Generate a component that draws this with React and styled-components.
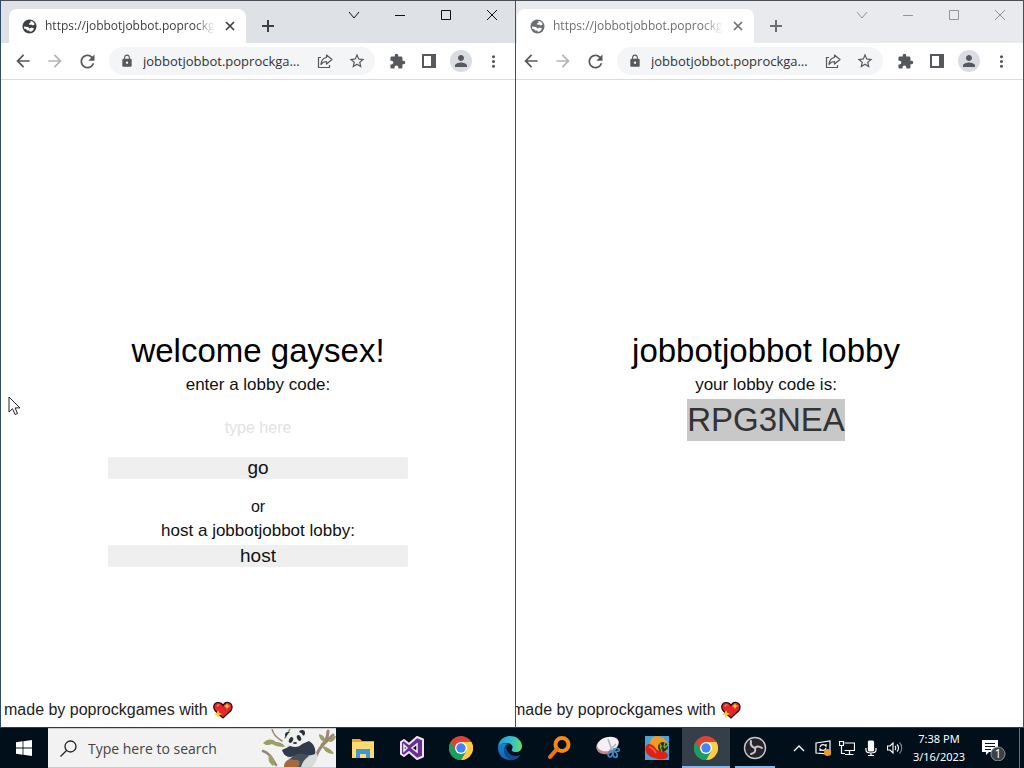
import React from "react";
import styled, { createGlobalStyle } from "styled-components";
import {
  MdArrowBack,
  MdArrowForward,
  MdExtension,
  MdLock,
  MdMoreVert,
  MdPerson,
  MdRefresh,
  MdStarBorder,
} from "react-icons/md";

const GlobalStyle = createGlobalStyle`
  * { box-sizing: border-box; }
  body { margin: 0; background: #fff; }
  button, input { font: inherit; color: inherit; margin: 0; padding: 0; border: 0; background: none; }
  svg { display: block; flex: none; }
`;

const uiFont = `"Open Sans", "Noto Sans", sans-serif`;
const pageFont = `"Liberation Sans", Arial, sans-serif`;

const Screen = styled.div`
  position: relative;
  display: flex;
  flex-direction: column;
  min-height: 100vh;
  overflow: hidden;
  font-family: ${uiFont};
`;

const Desktop = styled.main`
  flex: 1;
  display: flex;
`;

const Window = styled.section`
  position: relative;
  z-index: ${(p) => (p.$active ? 1 : 0)};
  flex: none;
  width: calc(50% + 4px);
  margin-right: -8px;
  display: flex;
  flex-direction: column;
  background: #fff;
  border: 1px solid #4a4f55;
  border-left-color: #2c4d68;
  border-bottom-color: #24424c;
`;

const TabStrip = styled.header`
  display: flex;
  align-items: flex-end;
  height: 42px;
  padding-left: 8px;
  background: ${(p) => (p.$active ? "#dee1e6" : "#e8eaed")};
  color: ${(p) => (p.$active ? "#3c4043" : "#6b6e72")};
`;

const Tab = styled.div`
  flex: 0 1 237px;
  min-width: 0;
  height: 34px;
  display: flex;
  align-items: center;
  gap: 8px;
  padding: 0 9px 0 13px;
  background: #fff;
  border-radius: 8px 8px 0 0;
`;

const TabTitle = styled.span`
  flex: 1;
  min-width: 0;
  overflow: hidden;
  white-space: nowrap;
  font-size: 12px;
  line-height: 16px;
  mask-image: linear-gradient(to right, #000 88%, transparent);
`;

const TabButton = styled.button`
  display: grid;
  place-items: center;
  width: 14px;
  height: 14px;
`;

const NewTab = styled.button`
  display: grid;
  place-items: center;
  width: 44px;
  height: 34px;
`;

const WindowControls = styled.div`
  align-self: flex-start;
  display: flex;
  margin-left: auto;
  color: ${(p) => (p.$active ? "#111" : "#929497")};
`;

const WindowButton = styled.button`
  display: grid;
  place-items: center;
  width: 46px;
  height: 28px;
`;

const Toolbar = styled.nav`
  display: flex;
  align-items: center;
  height: 37px;
  padding: 0 6px;
  border-bottom: 1px solid #dadce0;
  color: #55585c;
`;

const ToolButton = styled.button`
  display: grid;
  place-items: center;
  width: 32px;
  height: 32px;
  opacity: ${(p) => (p.disabled ? 0.45 : 1)};
`;

const Omnibox = styled.div`
  flex: 1;
  min-width: 0;
  display: flex;
  align-items: center;
  height: 28px;
  margin: 0 6px;
  padding: 0 2px 0 11px;
  border-radius: 14px;
  background: #f4f5f6;
`;

const Address = styled.input`
  flex: 1;
  min-width: 0;
  margin-left: 9px;
  outline: none;
  color: #303338;
  font-size: 13px;
  text-overflow: ellipsis;
`;

const Avatar = styled.span`
  display: grid;
  place-items: center;
  width: 22px;
  height: 22px;
  border-radius: 50%;
  background: #dadce3;
`;

const Page = styled.div`
  flex: 1;
  display: flex;
  flex-direction: column;
  font-family: ${pageFont};
  color: #111;
`;

const Lobby = styled.form`
  display: flex;
  flex-direction: column;
  align-items: center;
  padding-top: calc(50vh - 133px);
`;

const Title = styled.h1`
  margin: 0 0 2px;
  font-size: 33px;
  line-height: 40px;
  font-weight: 400;
  color: #000;
`;

const Line = styled.label`
  font-size: ${(p) => (p.$small ? 16 : 17)}px;
  line-height: 24px;
`;

const CodeInput = styled.input`
  width: 300px;
  height: 22px;
  margin: 20px 0 18px;
  text-align: center;
  font-size: 16px;
  outline: none;
  &::placeholder { color: #e2e2e2; opacity: 1; }
`;

const WideButton = styled.button`
  width: 300px;
  max-width: 100%;
  height: 22px;
  background: #efefef;
  border-radius: 2px;
  font-size: 19px;
  line-height: 22px;
`;

const Group = styled.div`
  display: flex;
  flex-direction: column;
  align-items: center;
  margin-top: 16px;
`;

const HostGroup = styled(Group)`
  gap: 2px;
  margin-top: 0;
`;

const LobbyCode = styled.output`
  margin-top: 2px;
  background: #c8c8c8;
  color: #333;
  font-size: 33px;
  line-height: 42px;
`;

const Credit = styled.footer`
  display: flex;
  align-items: center;
  gap: 5px;
  margin-top: auto;
  padding: 0 3px 5px;
  font-size: 16px;
  line-height: 24px;
  color: #222;
`;

const Pointer = styled.svg`
  position: absolute;
  z-index: 2;
  left: 8px;
  top: 396px;
`;

const Taskbar = styled.footer`
  display: flex;
  height: 40px;
  background: #010f1b;
  color: #fff;
`;

const Start = styled.button`
  display: grid;
  place-items: center;
  width: 48px;
`;

const Search = styled.label`
  display: flex;
  align-items: center;
  width: 288px;
  padding-left: 12px;
  margin-right: 3px;
  background: #f2f2f2;
  border: 1px solid #c9cccd;
  border-width: 1px 0;
  color: #222;
`;

const SearchInput = styled.input`
  flex: 1;
  min-width: 0;
  margin-left: 11px;
  outline: none;
  font-size: 14px;
  &::placeholder { color: #444; opacity: 1; }
`;

const Apps = styled.div`
  display: flex;
  gap: 1px;
`;

const AppButton = styled.button`
  display: flex;
  flex-direction: column;
  align-items: center;
  justify-content: space-between;
  width: 48px;
  padding-top: 8px;
  background: ${(p) => (p.$focused ? "#353f49" : "none")};
`;

const Underline = styled.span`
  width: ${(p) => (p.$wide ? 48 : 40)}px;
  height: 2px;
  background: #83b7e8;
`;

const Tray = styled.div`
  display: flex;
  align-items: center;
  margin-left: auto;
`;

const TrayButton = styled.button`
  display: grid;
  place-items: center;
  width: ${(p) => (p.$wide ? 44 : 24)}px;
  height: 40px;
`;

const Clock = styled.time`
  width: 64px;
  text-align: center;
  font-family: "Noto Sans", sans-serif;
  font-size: 11px;
  line-height: 18px;
`;

const ShowDesktop = styled.button`
  width: 5px;
  height: 40px;
  margin-left: 4px;
  border-left: 1px solid #66707a;
`;

const Stroke = ({ size = 16, box = 16, width = 1, children }) => (
  <svg width={size} height={size} viewBox={`0 0 ${box} ${box}`} fill="none" stroke="currentColor" strokeWidth={width}>
    {children}
  </svg>
);

const Globe = () => (
  <svg width="15" height="15" viewBox="0 0 15 15">
    <circle cx="7.5" cy="7.5" r="7" fill="currentColor" />
    <path d="M8.500 2c2 0 3.500 1.500 4.200 3.200L11 6.500 9 5.500 7.500 6 7 4.500 8.500 3.500zM2 7.500l4 .5 1.500 1.500 2-1 2.500 1c-.7 1.800-2 3-4 3.300L7 11.500H5L4 10H2.500C2.100 9.300 2 8.400 2 7.500z" fill="#fff" />
  </svg>
);

const Heart = () => (
  <svg width="20" height="20" viewBox="0 0 20 20">
    <path d="M10 18 2 10.500C-.5 7 1 2.500 5 2.500c2.500 0 4 1 5 3 1-2 3-3.500 5.500-3C19 3 20 7 18 10.500z" fill="#e8252c" stroke="#1a0808" strokeWidth="1.200" />
    <path d="m14 3 1 2.200 2.300.8-2.300 1L14 9.200 13 7l-2.200-1L13 5.200zM5 10l1.200 2.800L9 14l-2.800 1.200L5 18l-1.200-2.800L1 14l2.800-1.200z" fill="#ffc928" />
    <path d="M4 6.500c.3-1.200 1.200-1.700 2.400-1.500" stroke="#ff8c80" strokeWidth="1.300" fill="none" />
  </svg>
);

function BrowserWindow({ active, children }) {
  return (
    <Window $active={active}>
      <TabStrip $active={active}>
        <Tab>
          <Globe />
          <TabTitle>https://jobbotjobbot.poprockgames.com</TabTitle>
          <TabButton type="button" aria-label="Close tab">
            <Stroke size={10} box={10} width={1.7}><path d="m1 1 8 8M9 1 1 9" /></Stroke>
          </TabButton>
        </Tab>
        <NewTab type="button" aria-label="New tab">
          <Stroke size={14} box={14} width={2}><path d="M7 1v12M1 7h12" /></Stroke>
        </NewTab>
        <WindowControls $active={active}>
          <WindowButton type="button" aria-label="Search tabs">
            <Stroke size={12} box={12}><path d="m1 3 5 6 5-6" /></Stroke>
          </WindowButton>
          <WindowButton type="button" aria-label="Minimize">
            <Stroke size={12} box={12}><path d="M1 6.500h10" /></Stroke>
          </WindowButton>
          <WindowButton type="button" aria-label="Maximize">
            <Stroke size={12} box={12}><path d="M1.500 1.500h9v9h-9z" /></Stroke>
          </WindowButton>
          <WindowButton type="button" aria-label="Close">
            <Stroke size={12} box={12}><path d="m1 1 10 10M11 1 1 11" /></Stroke>
          </WindowButton>
        </WindowControls>
      </TabStrip>
      <Toolbar>
        <ToolButton type="button" aria-label="Back"><MdArrowBack size={20} /></ToolButton>
        <ToolButton type="button" aria-label="Forward" disabled><MdArrowForward size={20} /></ToolButton>
        <ToolButton type="button" aria-label="Reload"><MdRefresh size={21} /></ToolButton>
        <Omnibox>
          <MdLock size={14} />
          <Address aria-label="Address" readOnly value="jobbotjobbot.poprockgames.com" />
          <ToolButton type="button" aria-label="Share">
            <Stroke width={1.2}>
              <path d="M4 4.500H1.500v10h11V12" />
              <path d="M9.500 2 15 6.500 9.500 11V8.500C7 8.500 5.500 9.500 4 11.500c.3-4 2.500-6.500 5.500-7z" strokeLinejoin="round" />
            </Stroke>
          </ToolButton>
          <ToolButton type="button" aria-label="Bookmark"><MdStarBorder size={18} /></ToolButton>
        </Omnibox>
        <ToolButton type="button" aria-label="Extensions"><MdExtension size={17} /></ToolButton>
        <ToolButton type="button" aria-label="Side panel">
          <svg width="14" height="14" viewBox="0 0 14 14"><path fillRule="evenodd" fill="currentColor" d="M0 0h14v14H0zM2 2v10h7V2z" /></svg>
        </ToolButton>
        <ToolButton type="button" aria-label="Profile"><Avatar><MdPerson size={18} /></Avatar></ToolButton>
        <ToolButton type="button" aria-label="Menu"><MdMoreVert size={19} /></ToolButton>
      </Toolbar>
      <Page>
        {children}
        <Credit>made by poprockgames with <Heart /></Credit>
      </Page>
    </Window>
  );
}

const PandaArt = () => (
  <svg width="76" height="38" viewBox="0 0 76 38">
    <g fill="none" stroke="#9b8676" strokeLinecap="round">
      <path d="M12 0c1 6 5 9 10 12M30 0l-5 9" strokeWidth="1.500" />
      <path d="M73 6C65 14 61 16 58 23c-2 5-5 9-9 15M68 2c0 5-2 10-6 14" strokeWidth="3" />
      <path d="M3 22c6 2 8 6 13 14" strokeWidth="2.500" />
    </g>
    <path d="M3 14c5-5 10-4 13-1 4 0 8 2 9 5-6 0-10-1-13-3-4 2-7 1-9-1zM10 25c4 4 6 8 3 12-4-3-6-7-3-12zM59 5c5 1 7 5 6 8-4-1-6-4-6-8zM69 13c1-4 4-6 7-6-1 4-3 6-7 6zM62 17c6 1 10 4 12 8-6 0-10-3-12-8z" fill="#9a9f62" />
    <path d="M28 15c10-5 24 1 29 10 1 5-1 9-5 13H31c-3-6-6-14-3-23z" fill="#d8dcd9" />
    <path d="M22 21c6-2 10-7 20-6l7-3c5 3 7 8 6 13-8 3-17 1-25 3-5 0-7-4-8-7z" fill="#303a4a" />
    <path d="M28 32c8-9 15-8 21-5-5 4-7 7-8 11H25z" fill="#46505d" />
    <circle cx="28" cy="6" r="3" fill="#262e39" /><circle cx="42" cy="4" r="3" fill="#262e39" />
    <ellipse cx="35" cy="10" rx="9" ry="8" fill="#eef0ec" />
    <ellipse cx="31" cy="11" rx="2" ry="3" fill="#29323c" transform="rotate(25 31 11)" /><ellipse cx="39" cy="9" rx="2" ry="3" fill="#29323c" transform="rotate(-25 39 9)" />
    <ellipse cx="35" cy="14" rx="2" ry="1" fill="#29323c" />
    <path d="M24 38c0-7 6-9 10-7 6-1 7 3 4 7z" fill="#a4693f" />
  </svg>
);

const AppIcon = ({ children }) => <svg width="24" height="24" viewBox="0 0 24 24">{children}</svg>;

const ChromeIcon = () => (
  <AppIcon>
    <circle cx="12" cy="12" r="12" fill="#dc4437" />
    <path d="M12 24A12 12 0 0 0 22.400 6H12l5.200 9z" fill="#ffcd40" />
    <path d="M12 24A12 12 0 0 1 1.600 6l5.200 9 5.200 3 5.200-3z" fill="#17a05d" />
    <circle cx="12" cy="12" r="6" fill="#fff" />
    <circle cx="12" cy="12" r="4.700" fill="#4285f4" />
  </AppIcon>
);

const apps = [
  {
    name: "File Explorer",
    icon: (
      <AppIcon>
        <path d="M1 3h8l2 2h12v5H1z" fill="#e8a91c" />
        <path d="M1 6h22v16H1z" fill="#ffdb70" />
        <path d="M5 13h14v9h-4v-4H9v4H5z" fill="#3d97d8" />
      </AppIcon>
    ),
  },
  {
    name: "Visual Studio",
    icon: (
      <AppIcon>
        <path d="m17 1 6 2.500v17L17 23l-8-7-5 4-3-2V6l3-2 5 4z" fill="#68308f" stroke="#eee4f5" strokeWidth="2" strokeLinejoin="round" />
        <path d="M17 8v8l-5-4zM4 9l3 3-3 3z" fill="#010f1b" stroke="#f5edf9" strokeWidth="1.500" />
      </AppIcon>
    ),
  },
  { name: "Google Chrome", icon: <ChromeIcon /> },
  {
    name: "Microsoft Edge",
    icon: (
      <AppIcon>
        <defs>
          <linearGradient id="edgeTop" x1="0" x2="1"><stop stopColor="#1b9de2" /><stop offset=".6" stopColor="#35c1cd" /><stop offset="1" stopColor="#69df58" /></linearGradient>
          <linearGradient id="edgeBase" x2="0" y2="1"><stop stopColor="#1683d0" /><stop offset="1" stopColor="#1362b4" /></linearGradient>
        </defs>
        <path d="M0 12C0 5 5 0 12 0s12 5 12 10c0 4-3 6-6 6-3 0-5-1-4-3 2-3-1-6-5-6-5 0-8 2-9 5z" fill="url(#edgeTop)" />
        <path d="M0 12c1-4 6-6 10-4-4 1-4 6-2 9 3 4 9 5 14 2-2 4-6 5-10 5-7 0-12-5-12-12z" fill="url(#edgeBase)" />
        <path d="M9 8c-5 4-4 12 3 16 4 0 8-2 10-5-4 2-9 1-12-3-2-3-2-6-1-8z" fill="#0b4d91" />
      </AppIcon>
    ),
  },
  {
    name: "Everything",
    icon: (
      <AppIcon>
        <circle cx="15" cy="8.500" r="6.500" fill="none" stroke="#f68a16" strokeWidth="4" />
        <path d="M10 13 3 21" stroke="#ee7410" strokeWidth="4" strokeLinecap="round" />
      </AppIcon>
    ),
  },
  {
    name: "Snipping Tool",
    icon: (
      <AppIcon>
        <ellipse cx="11" cy="10" rx="11" ry="8" fill="#c58588" transform="rotate(-15 11 10)" />
        <ellipse cx="12" cy="8" rx="11" ry="7" fill="#f4eff2" transform="rotate(-15 12 8)" />
        <path d="m12 3 4 11M20 8l-7 7" stroke="#a9b2bb" strokeWidth="1.500" />
        <g fill="none" stroke="#3d8cc7" strokeWidth="1.700"><ellipse cx="14.500" cy="18" rx="2" ry="3" transform="rotate(25 14.500 18)" /><ellipse cx="19" cy="18.500" rx="2" ry="3" transform="rotate(-25 19 18.500)" /><ellipse cx="20.500" cy="14" rx="3" ry="1.500" /></g>
      </AppIcon>
    ),
  },
  {
    name: "Fruit",
    icon: (
      <AppIcon>
        <path d="M0 0h24v24H0z" fill="#46a5d6" />
        <path d="M6 3c5-6 14-2 16 4 2 9-3 13-10 13C5 16 4 8 6 3z" fill="#f39a24" />
        <path d="M1 10c3-5 9 0 11 4 4 1 11 2 11 5 0 5-8 5-13 3C4 21-1 17 1 10z" fill="#df2015" />
        <circle cx="18" cy="11" r="5" fill="#293522" />
        <path d="m14 7 3 4m3-5-1 5m4-2-4 3m-4-2 2 6m4-2 2 2" stroke="#8aaa3c" strokeWidth="1.200" />
        <path d="M4 11c3 0 5 3 7 6" fill="none" stroke="#ff6a3e" strokeWidth="1.500" />
      </AppIcon>
    ),
  },
  { name: "Google Chrome windows", icon: <ChromeIcon />, focused: true, open: true },
  {
    name: "OBS Studio",
    open: true,
    icon: (
      <AppIcon>
        <circle cx="12" cy="12" r="10.500" fill="#24242a" stroke="#c7c7c9" strokeWidth="1.400" />
        <g fill="none" stroke="#c7c7c9" strokeWidth="2" strokeLinecap="round">
          <path d="M8 5c-1 4 1 6 4 7" /><path d="M19 12c-3-2-6-2-7 0" /><path d="M8 18c4-1 5-3 4-6" />
        </g>
      </AppIcon>
    ),
  },
];

export default function App() {
  return (
    <Screen>
      <GlobalStyle />
      <Desktop>
        <BrowserWindow active>
          <Lobby onSubmit={(e) => e.preventDefault()}>
            <Title>welcome gaysex!</Title>
            <Line htmlFor="code">enter a lobby code:</Line>
            <CodeInput id="code" placeholder="type here" />
            <WideButton>go</WideButton>
            <Group>
              <Line as="span" $small>or</Line>
              <HostGroup>
                <Line htmlFor="host">host a jobbotjobbot lobby:</Line>
                <WideButton id="host" type="button" aria-label="host">host</WideButton>
              </HostGroup>
            </Group>
          </Lobby>
        </BrowserWindow>
        <BrowserWindow>
          <Lobby as="div">
            <Title>jobbotjobbot lobby</Title>
            <Line htmlFor="lobby">your lobby code is:</Line>
            <LobbyCode id="lobby">RPG3NEA</LobbyCode>
          </Lobby>
        </BrowserWindow>
      </Desktop>
      <Taskbar>
        <Start type="button" aria-label="Start">
          <svg width="16" height="16" viewBox="0 0 16 16" fill="#fff"><path d="m0 2.200 6.600-.9v6.300H0zM7.400 1.200 16 0v7.600H7.400zM0 8.400h6.600v6.300L0 13.800zM7.400 8.400H16V16l-8.600-1.200z" /></svg>
        </Start>
        <Search>
          <Stroke size={17} box={17} width={1.3}><circle cx="10.500" cy="6.500" r="5.500" /><path d="m6.500 10.500-6 6" /></Stroke>
          <SearchInput aria-label="Type here to search" placeholder="Type here to search" />
          <PandaArt />
        </Search>
        <Apps>
          {apps.map((app) => (
            <AppButton key={app.name} type="button" aria-label={app.name} $focused={app.focused}>
              {app.icon}
              {app.open && <Underline $wide={app.focused} />}
            </AppButton>
          ))}
        </Apps>
        <Tray>
          <TrayButton type="button" aria-label="Show hidden icons">
            <Stroke size={12} box={12} width={1.4}><path d="m1 9 5-5 5 5" /></Stroke>
          </TrayButton>
          <TrayButton type="button" aria-label="Windows Update">
            <Stroke width={1.2}>
              <path d="M1 3 15 1v13L1 13z" />
              <path d="M5 7c1-3 4-3 6-1V4M11 8c-1 3-4 3-6 1v2" />
              <circle cx="12.500" cy="12.500" r="3.500" fill="#f39a1d" stroke="none" />
            </Stroke>
          </TrayButton>
          <TrayButton type="button" aria-label="Network">
            <Stroke width={1.2}>
              <path d="M5.500 3h10v7.500h-10M10.500 11v3.500M6 14.500h8.500M.500 1.500h4v4h-4zM2.500 5.500v8H6" />
            </Stroke>
          </TrayButton>
          <TrayButton type="button" aria-label="Microphone">
            <Stroke width={1.2}>
              <rect x="5.500" y="1" width="5" height="10" rx="1" fill="#fff" />
              <path d="M3 8v2c0 4 10 4 10 0V8M8 13v3M5 15.500h6" />
            </Stroke>
          </TrayButton>
          <TrayButton type="button" aria-label="Volume">
            <Stroke width={1.1}>
              <path d="M.500 6h2.500l3-3v10l-3-3H.500z" />
              <path d="M8 6c1 1 1 3 0 4M10 4.500c2 2 2 5 0 7" />
              <path d="M12.500 2.500c3 3 3 8 0 11" opacity=".5" />
            </Stroke>
          </TrayButton>
          <Clock>7:38 PM<br />3/16/2023</Clock>
          <TrayButton type="button" aria-label="1 notification" $wide>
            <svg width="26" height="26" viewBox="0 0 26 26">
              <path d="M2 5h16v12H9l-3 3v-3H2z" fill="#fff" />
              <path d="M5 8.500h10M5 11.500h10M5 14.500h6" stroke="#010f1b" />
              <circle cx="18" cy="19" r="7" fill="#39424a" stroke="#8e9499" />
              <text x="18" y="23" textAnchor="middle" fontSize="12" fill="#fff">1</text>
            </svg>
          </TrayButton>
          <ShowDesktop type="button" aria-label="Show desktop" />
        </Tray>
      </Taskbar>
      <Pointer width="14" height="21" viewBox="0 0 14 21" aria-hidden="true">
        <path d="M1 1v15l3.500-3.300L7 18.500l2.500-1-2.400-5.600H12z" fill="#fff" stroke="#222" />
      </Pointer>
    </Screen>
  );
}
